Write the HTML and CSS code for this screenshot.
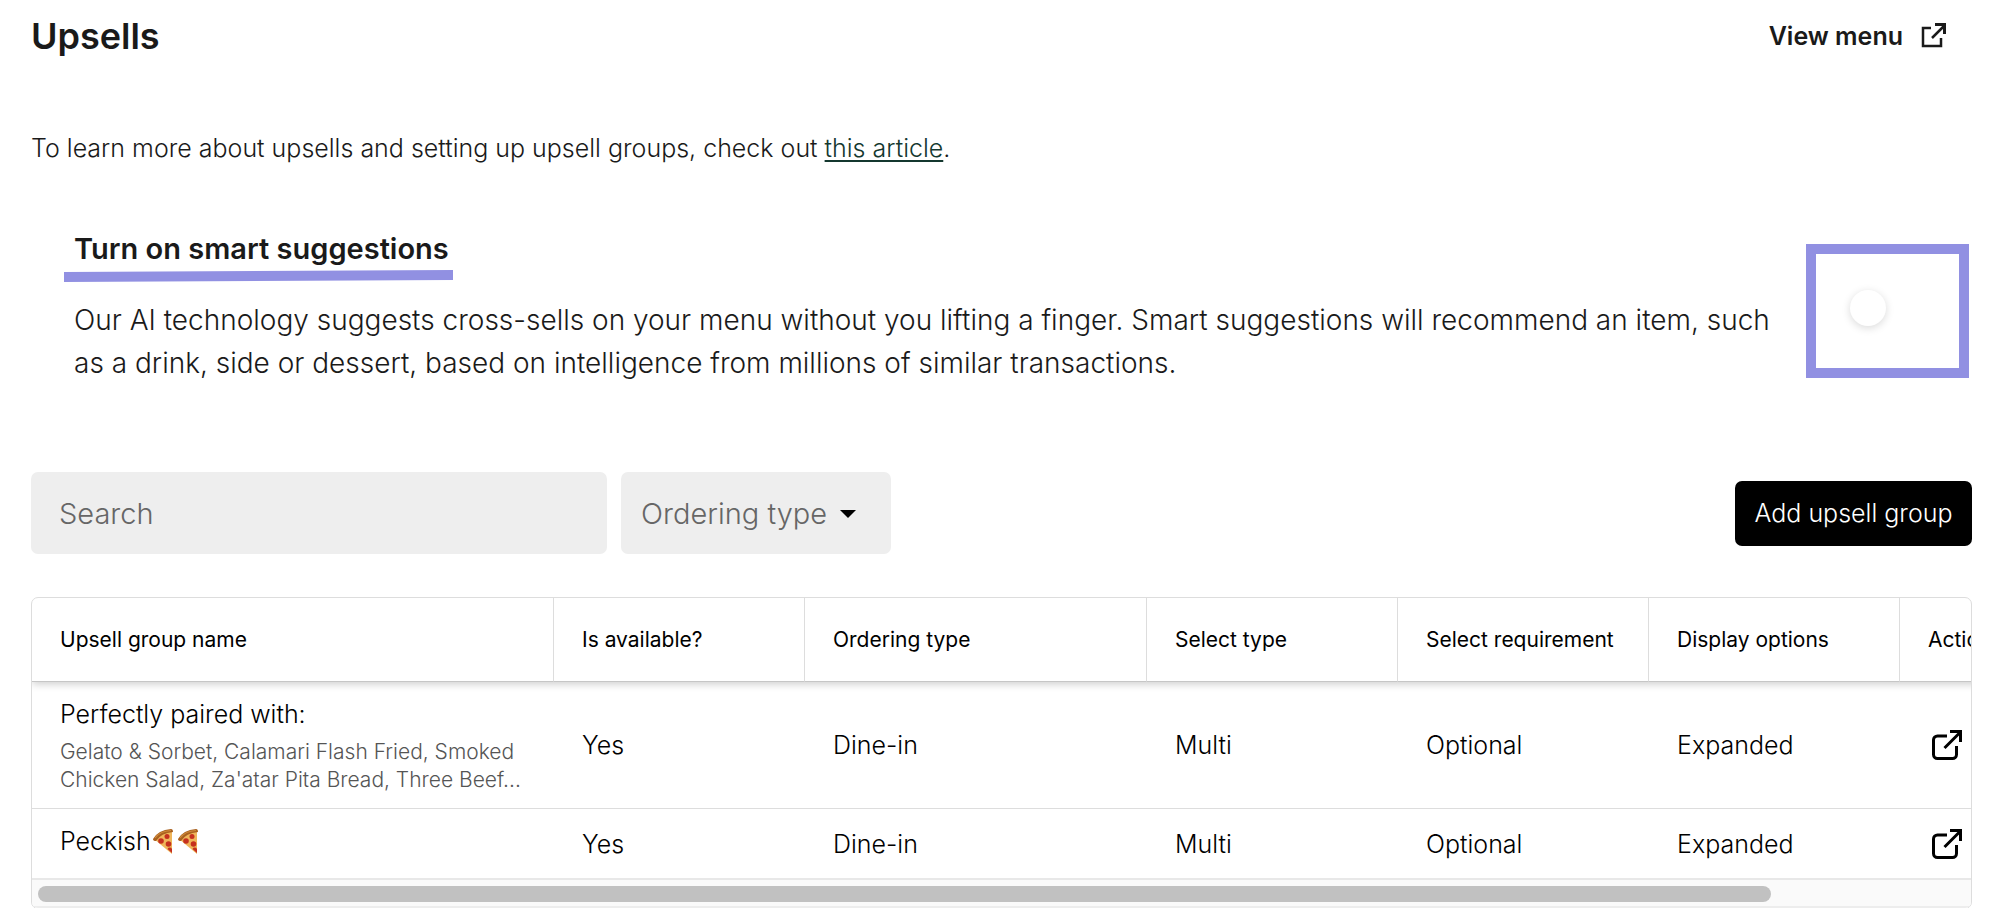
FILE: index.html
```
<!DOCTYPE html>
<html lang="en">
<head>
    <meta charset="UTF-8">
    <meta name="viewport" content="width=device-width, initial-scale=1.0">
    <title>Upsells</title>
    <link rel="stylesheet" href="styles.css">
</head>
<body>
    <svg class="defs" aria-hidden="true">
        <symbol id="icon-open" viewBox="0 0 32 32">
            <path d="M16 7H6.500a4 4 0 0 0-4 4v14.500a4 4 0 0 0 4 4h15a4 4 0 0 0 4-4V17M13.500 19 29 3.500" fill="none" stroke="currentColor" stroke-width="3"/>
            <path d="M19 1h12v12h-3V4h-9z" fill="currentColor"/>
        </symbol>
        <symbol id="icon-pizza" viewBox="0 0 20 25">
            <path d="M1 10 Q7 3 19 2 L19 25 Z" fill="#efb55a"/>
            <path d="M0 10 Q5 1 18 0 Q20 0 20 3 Q8 4 3 12 Q0 12 0 10Z" fill="#a9611f"/>
            <path d="M2 9 Q7 2 18 1.500" fill="none" stroke="#d08a3a" stroke-width="1.200"/>
            <g fill="#c5301f">
                <circle cx="14" cy="7.500" r="2.500"/>
                <circle cx="8" cy="12" r="2.800"/>
                <circle cx="15.500" cy="15" r="2.800"/>
                <path d="M14.500 20a2.500 2.500 0 0 1 4.500 0v4z"/>
            </g>
        </symbol>
    </svg>

    <header class="page-header">
        <h1>Upsells</h1>
        <a class="view-menu" href="#">View menu
            <svg viewBox="0 0 26 26" aria-hidden="true">
                <path d="M10 5H2v18h18v-8M11 15 23 3" fill="none" stroke="currentColor" stroke-width="2.500"/>
                <path d="M14 0h11v11h-3V3h-8z" fill="currentColor"/>
            </svg>
        </a>
    </header>

    <main>
        <p class="intro">To learn more about upsells and setting up upsell groups, check out <a href="#">this article</a>.</p>

        <section class="smart">
            <div class="smart-text">
                <h2><label for="smart-toggle">Turn on smart suggestions</label>
                    <svg class="underline" viewBox="0 0 389 12" preserveAspectRatio="none" aria-hidden="true"><path d="M0 2 389 0V10L0 12z" fill="#9190e2"/></svg>
                </h2>
                <p>Our AI technology suggests cross-sells on your menu without you lifting a finger. Smart suggestions will recommend an item, such as a drink, side or dessert, based on intelligence from millions of similar transactions.</p>
            </div>
            <div class="toggle-box">
                <input type="checkbox" id="smart-toggle" class="toggle">
            </div>
        </section>

        <div class="toolbar">
            <input type="text" class="search" placeholder="Search" aria-label="Search">
            <div class="select-wrap">
                <select class="type-select" aria-label="Ordering type">
                    <option>Ordering type</option>
                    <option>Dine-in</option>
                </select>
            </div>
            <button type="button" class="add-button">Add upsell group</button>
        </div>

        <div class="table-box">
            <div class="table-scroll">
                <table>
                    <colgroup>
                        <col class="col-name"><col class="col-std"><col class="col-type"><col class="col-std"><col class="col-std"><col class="col-std"><col class="col-action">
                    </colgroup>
                    <thead>
                        <tr>
                            <th>Upsell group name</th>
                            <th>Is available?</th>
                            <th>Ordering type</th>
                            <th>Select type</th>
                            <th>Select requirement</th>
                            <th>Display options</th>
                            <th>Actions</th>
                        </tr>
                    </thead>
                    <tbody>
                        <tr>
                            <td>
                                <div class="name">Perfectly paired with:</div>
                                <div class="items">Gelato &amp; Sorbet, Calamari Flash Fried, Smoked<br>Chicken Salad, Za'atar Pita Bread, Three Beef...</div>
                            </td>
                            <td>Yes</td>
                            <td>Dine-in</td>
                            <td>Multi</td>
                            <td>Optional</td>
                            <td>Expanded</td>
                            <td><a class="open" href="#" aria-label="Open"><svg><use href="#icon-open"/></svg></a></td>
                        </tr>
                        <tr>
                            <td><div class="name">Peckish<svg class="pizza"><use href="#icon-pizza"/></svg><svg class="pizza"><use href="#icon-pizza"/></svg></div></td>
                            <td>Yes</td>
                            <td>Dine-in</td>
                            <td>Multi</td>
                            <td>Optional</td>
                            <td>Expanded</td>
                            <td><a class="open" href="#" aria-label="Open"><svg><use href="#icon-open"/></svg></a></td>
                        </tr>
                    </tbody>
                </table>
            </div>
            <div class="scrollbar"><div class="thumb"></div></div>
        </div>
    </main>
</body>
</html>
```
FILE: styles.css
```
* {
    box-sizing: border-box;
}

body {
    margin: 0;
    padding: 12px 30px 0 31px;
    font-family: Inter, "Open Sans", sans-serif;
    font-size: 25px;
    color: #1a1a1a;
    background-color: #fff;
}

h1, h2, p {
    margin: 0;
}

.defs {
    display: none;
}

.page-header {
    display: flex;
    justify-content: space-between;
    align-items: center;
    height: 48px;
    padding-right: 25px;
}

h1 {
    font-size: 36px;
    font-weight: 600;
}

.view-menu {
    display: flex;
    align-items: center;
    gap: 18px;
    font-size: 25px;
    font-weight: 600;
    color: inherit;
    text-decoration: none;
}

.view-menu svg {
    width: 26px;
    height: 26px;
}

.intro {
    margin-top: 72px;
    font-size: 25px;
    font-weight: 300;
    line-height: 32px;
}

.intro a {
    color: #14382f;
    text-underline-offset: 3px;
}

.smart {
    display: flex;
    justify-content: space-between;
    margin-top: 65px;
    padding: 0 3px 0 43px;
}

.smart-text {
    flex: 1;
    margin-right: 16px;
}

h2 {
    position: relative;
    width: fit-content;
    font-size: 29px;
    font-weight: 600;
    line-height: 40px;
}

.underline {
    position: absolute;
    left: -10px;
    top: 41px;
    width: 389px;
    height: 12px;
}

.smart-text p {
    margin-top: 30px;
    font-size: 28px;
    font-weight: 300;
    line-height: 43px;
}

.toggle-box {
    width: 163px;
    height: 134px;
    margin-top: 15px;
    padding: 36px 34px;
    border: 10px solid #9190e2;
}

.toggle {
    appearance: none;
    display: block;
    width: 70px;
    height: 36px;
    margin: 0;
}

.toggle::before {
    content: "";
    display: block;
    width: 36px;
    height: 36px;
    border-radius: 50%;
    background: #fff;
    box-shadow: 0 2px 8px rgba(0, 0, 0, 0.15);
}

.toolbar {
    display: flex;
    align-items: center;
    margin-top: 87px;
}

.search, .type-select {
    height: 82px;
    border: none;
    border-radius: 7px;
    background-color: #eee;
    font-family: inherit;
    font-size: 29px;
    font-weight: 300;
    color: #666;
}

.search {
    width: 576px;
    padding: 0 28px;
}

.search::placeholder {
    color: #666;
}

.select-wrap {
    position: relative;
    margin-left: 14px;
}

.select-wrap::after {
    content: "";
    position: absolute;
    right: 35px;
    top: 38px;
    border: 8px solid transparent;
    border-top-color: #000;
    border-bottom: none;
    pointer-events: none;
}

.type-select {
    appearance: none;
    width: 270px;
    padding: 0 20px;
}

.add-button {
    height: 65px;
    margin-left: auto;
    width: 237px;
    padding: 0;
    border: none;
    border-radius: 7px;
    background: #000;
    color: #fff;
    font-family: inherit;
    font-size: 25px;
    font-weight: 300;
}

.table-box {
    margin-top: 43px;
    border: 1px solid #ddd;
    border-radius: 7px;
    overflow: hidden;
    color: #000;
}

.table-scroll {
    overflow: hidden;
}

table {
    width: 2172px;
    table-layout: fixed;
    border-collapse: separate;
    border-spacing: 0;
}

.col-name {
    width: 522px;
}

.col-std {
    width: 251px;
}

.col-type {
    width: 342px;
}

thead {
    box-shadow: 0 2px 8px rgba(0, 0, 0, 0.2);
}

th {
    height: 84px;
    padding: 0 28px;
    border-right: 1px solid #ddd;
    border-bottom: 1px solid #c6c6c6;
    font-size: 21px;
    font-weight: 400;
    text-align: left;
    white-space: nowrap;
}

td {
    height: 69px;
    padding: 0 28px;
    font-size: 25px;
    font-weight: 300;
}

tbody tr:first-child td {
    height: 127px;
    border-bottom: 1px solid #ddd;
}

.name {
    line-height: 36px;
    padding-bottom: 6px;
    white-space: nowrap;
}

.items {
    font-size: 21px;
    line-height: 28px;
    color: #555;
    white-space: nowrap;
}

.pizza {
    width: 20px;
    height: 25px;
    margin: 0 3px 0 2px;
    vertical-align: -4px;
}

.open {
    display: flex;
    width: 32px;
    height: 32px;
    margin-left: 3px;
    color: #000;
}

.open svg {
    width: 32px;
    height: 32px;
}

.scrollbar {
    height: 30px;
    padding: 6px 7px 0 6px;
    border-top: 2px solid #e8e8e8;
    border-bottom: 2px solid #ededed;
    background: #fafafa;
}

.thumb {
    width: 90%;
    height: 16px;
    border-radius: 8px;
    background: #c1c1c1;
}
```
